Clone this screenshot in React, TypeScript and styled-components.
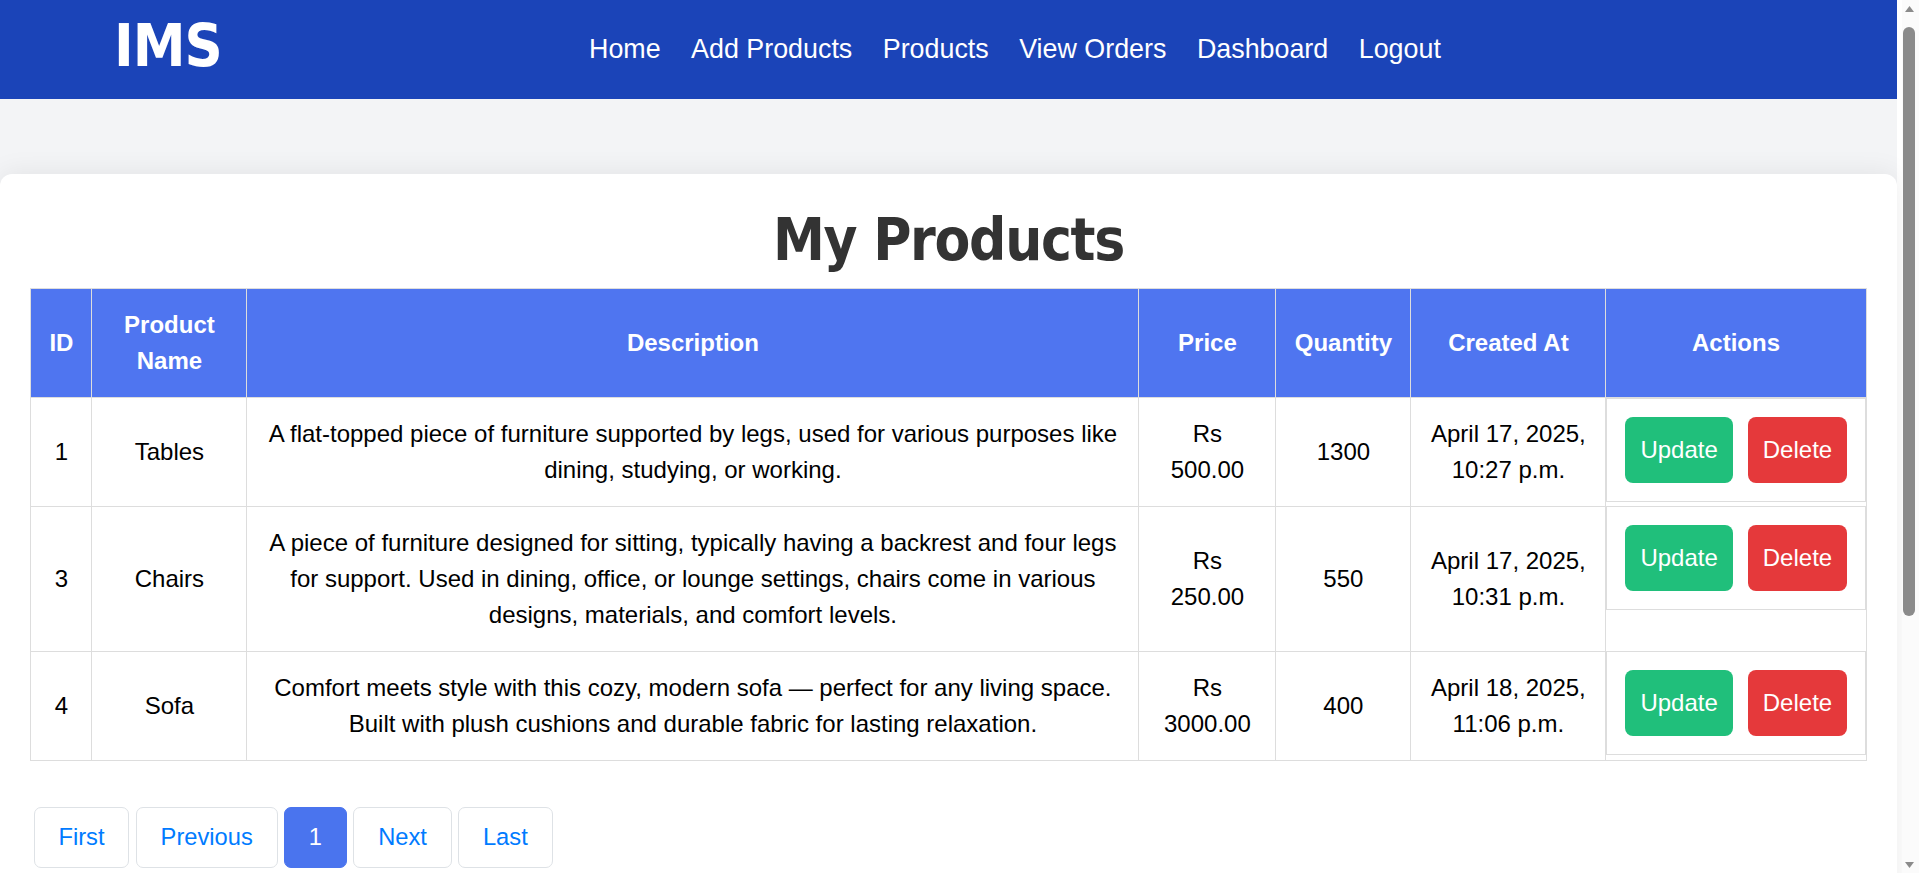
import React from "react";
import styled, { createGlobalStyle } from "styled-components";

const GlobalStyle = createGlobalStyle`
  html { background: #ffffff; }
  body {
    margin: 0;
    font-family: "Liberation Sans", Arial, sans-serif;
  }
`;

const Page = styled.div`
  width: 1897px;
  min-height: 1236px;
  background: #f3f4f6;
  padding-bottom: 40px;
  box-sizing: border-box;
`;

const Navbar = styled.nav`
  height: 99px;
  background: #1b44b8;
  display: flex;
  align-items: center;
  padding-left: 114px;
`;

const Brand = styled.div`
  flex: 0 0 475px;
  font-family: "DejaVu Sans Condensed", "DejaVu Sans", sans-serif;
  font-stretch: condensed;
  font-weight: 700;
  font-size: 59px;
  line-height: 1;
  letter-spacing: -1px;
  color: #ffffff;
  margin-bottom: 9px;
`;

const NavLinks = styled.div`
  display: flex;
  gap: 30.5px;
  margin-bottom: 1px;
`;

const NavLink = styled.a`
  color: #ffffff;
  font-size: 26.85px;
  text-decoration: none;
  cursor: pointer;
`;

const Main = styled.main`
  padding-top: 75px;
`;

const Card = styled.section`
  width: 1897px;
  min-height: 1022px;
  box-sizing: border-box;
  background: #ffffff;
  border-radius: 12px;
  padding: 30.4px;
  box-shadow: 0 0 28px rgba(0, 0, 0, 0.08);
`;

const Title = styled.h1`
  margin: 3px 0 13px;
  text-align: center;
  font-family: "DejaVu Sans Condensed", "DejaVu Sans", sans-serif;
  font-stretch: condensed;
  font-weight: 700;
  font-size: 58px;
  line-height: 67.5px;
  letter-spacing: -1.3px;
  color: #333333;
`;

const Table = styled.table`
  width: 100%;
  border-collapse: collapse;
  table-layout: fixed;
  border: 1px solid #dddddd;
  font-size: 24px;
  line-height: 36px;
`;

const HeadCell = styled.th`
  background: #4f75f0;
  color: #ffffff;
  font-weight: 700;
  padding: 18px;
  border: 1px solid #dddddd;
  text-align: center;
`;

const Cell = styled.td`
  padding: 18px;
  border: 1px solid #dddddd;
  text-align: center;
  color: #000000;
`;

const ActionsCell = styled.td`
  display: flex;
  gap: 15px;
  padding: 18px;
  border: 1px solid #dddddd;
`;

const ActionButton = styled.button<{ $variant: "update" | "delete" }>`
  font-family: inherit;
  font-size: 24px;
  line-height: 36px;
  padding: 15px;
  border: none;
  border-radius: 8px;
  color: #ffffff;
  background: ${(p) => (p.$variant === "delete" ? "#e5393b" : "#20bf7b")};
  cursor: pointer;
`;

const Pagination = styled.nav`
  display: flex;
  margin-top: 45.7px;
`;

const PageButton = styled.button<{ $active?: boolean }>`
  margin: 0 3.25px;
  font-family: inherit;
  font-size: 23.7px;
  line-height: 36px;
  padding: 11.6px 23.8px;
  border: 1px solid ${(p) => (p.$active ? "#4a74ee" : "#dee2e6")};
  border-radius: 7px;
  background: ${(p) => (p.$active ? "#4a74ee" : "#ffffff")};
  color: ${(p) => (p.$active ? "#ffffff" : "#007bff")};
  cursor: pointer;
`;

/* Browser scrollbar drawn over the page's right edge */
const ScrollTrack = styled.div`
  position: fixed;
  top: 0;
  right: 0;
  width: 17px;
  height: 100vh;
  background: #fbfbfb;
  display: flex;
  flex-direction: column;
  align-items: flex-start;
  box-sizing: border-box;
  padding-left: 1px;
`;

const ScrollArrow = styled.div`
  height: 17px;
  width: 13px;
  display: flex;
  align-items: center;
  justify-content: center;
`;

const ScrollThumb = styled.div`
  margin-top: 10px;
  height: 589px;
  width: 12px;
  border-radius: 6px;
  background: #8b8b8b;
`;

const ScrollSpacer = styled.div`
  flex: 1;
`;

type Product = {
  id: number;
  name: string;
  description: string;
  price: string;
  quantity: number;
  createdAt: string;
};

const products: Product[] = [
  {
    id: 1,
    name: "Tables",
    description:
      "A flat-topped piece of furniture supported by legs, used for various purposes like dining, studying, or working.",
    price: "500.00",
    quantity: 1300,
    createdAt: "April 17, 2025, 10:27 p.m.",
  },
  {
    id: 3,
    name: "Chairs",
    description:
      "A piece of furniture designed for sitting, typically having a backrest and four legs for support. Used in dining, office, or lounge settings, chairs come in various designs, materials, and comfort levels.",
    price: "250.00",
    quantity: 550,
    createdAt: "April 17, 2025, 10:31 p.m.",
  },
  {
    id: 4,
    name: "Sofa",
    description:
      "Comfort meets style with this cozy, modern sofa — perfect for any living space. Built with plush cushions and durable fabric for lasting relaxation.",
    price: "3000.00",
    quantity: 400,
    createdAt: "April 18, 2025, 11:06 p.m.",
  },
];

const navItems = ["Home", "Add Products", "Products", "View Orders", "Dashboard", "Logout"];
const columnWidths = [61, 155, 892, 137, 135, 195];

export default function App() {
  return (
    <>
      <GlobalStyle />
      <Page>
        <Navbar>
          <Brand>IMS</Brand>
          <NavLinks>
            {navItems.map((item) => (
              <NavLink key={item}>{item}</NavLink>
            ))}
          </NavLinks>
        </Navbar>
        <Main>
          <Card>
            <Title>My Products</Title>
            <Table>
              <colgroup>
                {columnWidths.map((w, i) => (
                  <col key={i} style={{ width: w }} />
                ))}
                <col />
              </colgroup>
              <thead>
                <tr>
                  <HeadCell>ID</HeadCell>
                  <HeadCell>Product Name</HeadCell>
                  <HeadCell>Description</HeadCell>
                  <HeadCell>Price</HeadCell>
                  <HeadCell>Quantity</HeadCell>
                  <HeadCell>Created At</HeadCell>
                  <HeadCell>Actions</HeadCell>
                </tr>
              </thead>
              <tbody>
                {products.map((p) => (
                  <tr key={p.id}>
                    <Cell>{p.id}</Cell>
                    <Cell>{p.name}</Cell>
                    <Cell>{p.description}</Cell>
                    <Cell>
                      Rs
                      <br />
                      {p.price}
                    </Cell>
                    <Cell>{p.quantity}</Cell>
                    <Cell>{p.createdAt}</Cell>
                    <ActionsCell>
                      <ActionButton $variant="update">Update</ActionButton>
                      <ActionButton $variant="delete">Delete</ActionButton>
                    </ActionsCell>
                  </tr>
                ))}
              </tbody>
            </Table>
            <Pagination>
              <PageButton>First</PageButton>
              <PageButton>Previous</PageButton>
              <PageButton $active>1</PageButton>
              <PageButton>Next</PageButton>
              <PageButton>Last</PageButton>
            </Pagination>
          </Card>
        </Main>
      </Page>
      <ScrollTrack aria-hidden="true">
        <ScrollArrow>
          <svg width="9" height="6" viewBox="0 0 9 6">
            <polygon points="4.5,0 9,6 0,6" fill="#8b8b8b" />
          </svg>
        </ScrollArrow>
        <ScrollThumb />
        <ScrollSpacer />
        <ScrollArrow>
          <svg width="9" height="6" viewBox="0 0 9 6">
            <polygon points="0,0 9,0 4.5,6" fill="#8b8b8b" />
          </svg>
        </ScrollArrow>
      </ScrollTrack>
    </>
  );
}
